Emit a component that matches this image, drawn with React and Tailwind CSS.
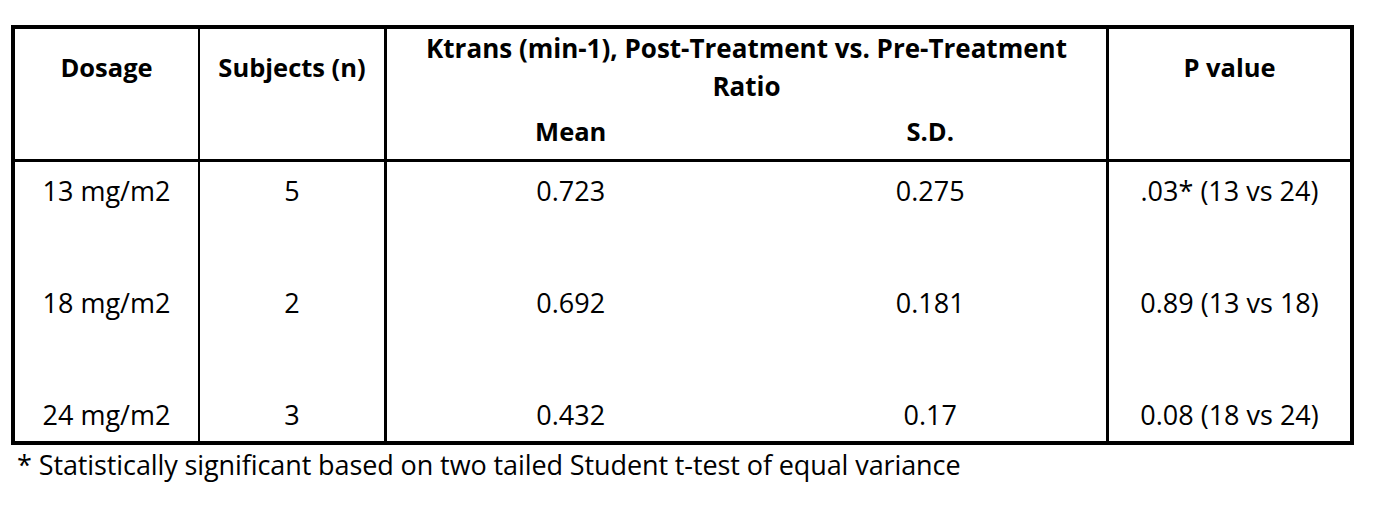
const rows = [
  { dose: '13 mg/m2', n: '5', mean: '0.723', sd: '0.275', p: '.03* (13 vs 24)' },
  { dose: '18 mg/m2', n: '2', mean: '0.692', sd: '0.181', p: '0.89 (13 vs 18)' },
  { dose: '24 mg/m2', n: '3', mean: '0.432', sd: '0.17', p: '0.08 (18 vs 24)' },
];

const font = { fontFamily: '"Open Sans", "Liberation Sans", sans-serif' };

export default function App() {
  return (
    <div className="w-[1389px] h-[513px] bg-white text-black pt-[25px] pl-[11px]" style={font}>
      <div className="w-[1343px] border-4 border-black">
        {/* header */}
        <div className="grid grid-cols-[185px_187px_722px_1fr] border-b-[3px] border-black h-[133px] font-bold text-[25.5px]">
          <div className="border-r-2 border-black">
            <div className="h-[76px] flex items-center justify-center">Dosage</div>
          </div>
          <div className="border-r-[3px] border-black">
            <div className="h-[76px] flex items-center justify-center">Subjects (n)</div>
          </div>
          <div className="border-r-[3px] border-black flex flex-col">
            <div className="text-center leading-[38px] text-[26px]">
              Ktrans (min-1), Post-Treatment vs. Pre-Treatment
              <br />
              Ratio
            </div>
            <div className="grid grid-cols-2 leading-[38px] mt-[7px]">
              <div className="text-center pl-2">Mean</div>
              <div className="text-center pl-2">S.D.</div>
            </div>
          </div>
          <div>
            <div className="h-[76px] flex items-center justify-center">P value</div>
          </div>
        </div>
        {/* body */}
        <div className="grid grid-cols-[185px_187px_722px_1fr] text-[27px]">
          <div className="border-r-2 border-black pt-[11px] pb-[8px] flex flex-col gap-[76px]">
            {rows.map((r) => (
              <div key={r.dose} className="h-[36px] leading-[36px] text-center">{r.dose}</div>
            ))}
          </div>
          <div className="border-r-[3px] border-black pt-[11px] pb-[8px] flex flex-col gap-[76px]">
            {rows.map((r) => (
              <div key={r.dose} className="h-[36px] leading-[36px] text-center">{r.n}</div>
            ))}
          </div>
          <div className="border-r-[3px] border-black pt-[11px] pb-[8px] flex flex-col gap-[76px]">
            {rows.map((r) => (
              <div key={r.dose} className="h-[36px] leading-[36px] grid grid-cols-2">
                <div className="text-center pl-2">{r.mean}</div>
                <div className="text-center pl-2">{r.sd}</div>
              </div>
            ))}
          </div>
          <div className="pt-[11px] pb-[8px] flex flex-col gap-[76px]">
            {rows.map((r) => (
              <div key={r.dose} className="h-[36px] leading-[36px] text-center">{r.p}</div>
            ))}
          </div>
        </div>
      </div>
      <div className="pl-[6px] text-[27px] leading-[36px] mt-[2px] tracking-[-0.1px]">
        * Statistically significant based on two tailed Student t-test of equal variance
      </div>
    </div>
  );
}
